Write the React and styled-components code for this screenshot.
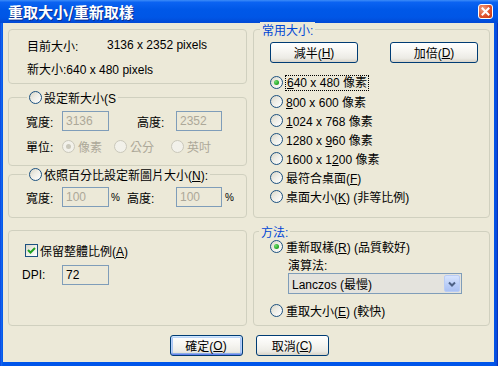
import React from "react";
import styled, { createGlobalStyle, css } from "styled-components";

const GlobalStyle = createGlobalStyle`
  html, body {
    margin: 0;
    padding: 0;
    background: #ffffff;
  }
  body {
    font-family: "Liberation Sans", "Noto Sans CJK TC", sans-serif;
    font-size: 12px;
    color: #000;
  }
`;

const Window = styled.div`
  width: 498px;
  height: 366px;
  box-sizing: border-box;
  display: flex;
  flex-direction: column;
  background: linear-gradient(90deg, #0831d9 0px, #166aee 1px, #0055ea 3px, #0055ea 494px, #0a4ad8 497px, #001ea0 498px);
`;

const TitleBar = styled.div`
  height: 23px;
  flex: none;
  display: flex;
  align-items: center;
  justify-content: space-between;
  padding: 0 5px 0 8px;
  background: linear-gradient(180deg, #3d8cf8 0%, #0b63f2 10%, #0058e8 40%, #0056e6 75%, #0149d5 100%);
  color: #fff;
  font: bold 15px "Noto Sans CJK TC", sans-serif;
  text-shadow: 1px 1px 0 #0b2f8e;
`;

const CloseButton = styled.div`
  width: 15px;
  height: 15px;
  box-sizing: border-box;
  border: 1px solid #fff;
  border-radius: 3px;
  background: radial-gradient(circle at 30% 30%, #f0a080, #e0532c 55%, #c2350f);
  display: flex;
  align-items: center;
  justify-content: center;
`;

const Client = styled.div`
  flex: 1;
  margin: 0 4px 4px 3px;
  background: #ece9d8;
  padding: 6px 4px 0 5px;
  display: flex;
  flex-direction: column;
`;

const Columns = styled.div`
  display: flex;
  gap: 6px;
`;

const Column = styled.div`
  display: flex;
  flex-direction: column;
  width: ${(p) => p.$w}px;
`;

const Group = styled.div`
  position: relative;
  box-sizing: border-box;
  height: ${(p) => p.$h}px;
  margin-top: ${(p) => p.$mt || 0}px;
  border: 1px solid #d0d0bf;
  border-radius: 4px;
  padding: ${(p) => p.$pad};
  display: flex;
  flex-direction: column;
`;

const Legend = styled.div`
  position: absolute;
  top: -8px;
  left: ${(p) => p.$left}px;
  height: 15px;
  padding: 0 2px;
  background: #ece9d8;
  display: flex;
  align-items: center;
  gap: 2px;
  white-space: nowrap;
  color: ${(p) => (p.$blue ? "#0046d5" : "#000")};
`;

const InfoRow = styled.div`
  height: 16px;
  display: flex;
  align-items: center;
  white-space: nowrap;
  & + & {
    margin-top: 7px;
  }
`;

const Row = styled.div`
  height: ${(p) => p.$h || 20}px;
  display: flex;
  align-items: center;
  white-space: nowrap;
  margin-top: ${(p) => p.$mt || 0}px;
  margin-left: ${(p) => p.$ml || 0}px;
`;

const Label = styled.span`
  width: ${(p) => p.$w}px;
  flex: none;
  margin-left: ${(p) => p.$ml || 0}px;
  color: ${(p) => (p.$disabled ? "#aca899" : "#000")};
`;

const Field = styled.div`
  box-sizing: border-box;
  width: ${(p) => p.$w}px;
  height: 20px;
  flex: none;
  border: 1px solid #7f9db9;
  background: #ece9d8;
  color: ${(p) => (p.$disabled ? "#aca899" : "#000")};
  padding-left: 3px;
  line-height: 18px;
`;

const Percent = styled.span`
  width: 8px;
  flex: none;
  font-size: 10px;
  margin-left: ${(p) => p.$ml}px;
`;

const Circle = styled.span`
  box-sizing: border-box;
  width: 13px;
  height: 13px;
  flex: none;
  border-radius: 50%;
  border: 1px solid ${(p) => (p.$disabled ? "#cac8bb" : "#1c5180")};
  background: ${(p) =>
    p.$disabled
      ? "#f2f1ea"
      : "linear-gradient(135deg, #d8d5c6 0%, #eeede6 45%, #ffffff 100%)"};
  display: flex;
  align-items: center;
  justify-content: center;
  &::after {
    content: "";
    width: 5px;
    height: 5px;
    border-radius: 50%;
    display: ${(p) => (p.$checked ? "block" : "none")};
    background: ${(p) =>
      p.$disabled ? "#cac8bb" : "radial-gradient(circle at 35% 35%, #6fe06f, #21a121 70%)"};
  }
`;

const RadioOpt = styled.span`
  display: inline-flex;
  align-items: center;
  gap: 3px;
  width: ${(p) => (p.$w ? `${p.$w}px` : "auto")};
  flex: none;
  color: ${(p) => (p.$disabled ? "#aca899" : "#000")};
`;

const RadioRow = styled.div`
  height: 19px;
  display: flex;
  align-items: center;
  gap: 3px;
  white-space: nowrap;
`;

const Focus = styled.span`
  outline: 1px dotted #000;
  outline-offset: 0;
  padding: 0 1px;
  line-height: 14px;
`;

const Check = styled.span`
  box-sizing: border-box;
  width: 13px;
  height: 13px;
  flex: none;
  border: 1px solid #1c5180;
  background: linear-gradient(135deg, #d8d5c6 0%, #eeede6 45%, #ffffff 100%);
  display: flex;
  align-items: center;
  justify-content: center;
`;

const ButtonRow = styled.div`
  display: flex;
  justify-content: ${(p) => p.$justify || "center"};
  gap: ${(p) => p.$gap || 0}px;
  margin-top: ${(p) => p.$mt || 0}px;
`;

const Button = styled.div`
  box-sizing: border-box;
  width: ${(p) => p.$w}px;
  height: 21px;
  border: 1px solid #003c74;
  border-radius: 3px;
  background: linear-gradient(180deg, #ffffff 0%, #f6f5f1 45%, #ecebe5 80%, #d8d3c8 100%);
  display: flex;
  align-items: center;
  justify-content: center;
  white-space: nowrap;
  ${(p) =>
    p.$default &&
    css`
      box-shadow: inset 0 1px 0 #cee7ff, inset 0 -1px 0 #6982ee, inset 1px 0 0 #b8d0f9,
        inset -1px 0 0 #b8d0f9, inset 0 2px 0 #bcd4f6, inset 0 -2px 0 #89ade4,
        inset 2px 0 0 #a9c5f4, inset -2px 0 0 #a9c5f4;
    `}
`;

const Select = styled.div`
  box-sizing: border-box;
  width: 174px;
  height: 21px;
  margin: 1px 0 0 18px;
  border: 1px solid #7f9db9;
  background: #e4e3dd;
  display: flex;
  align-items: center;
  justify-content: space-between;
  padding: 1px 1px 1px 3px;
`;

const DropButton = styled.div`
  width: 16px;
  height: 17px;
  box-sizing: border-box;
  border: 1px solid #b9ccf5;
  border-radius: 2px;
  background: linear-gradient(180deg, #d7e4fd 0%, #b9cdf8 60%, #aac1f3 100%);
  display: flex;
  align-items: center;
  justify-content: center;
`;

const RadioList = styled.div`
  display: flex;
  flex-direction: column;
  margin-top: ${(p) => p.$mt || 0}px;
`;

const Radio = ({ checked, disabled, w, children }) => (
  <RadioOpt $w={w} $disabled={disabled}>
    <Circle $checked={checked} $disabled={disabled} />
    {children}
  </RadioOpt>
);

const App = () => {
  return (
    <>
      <GlobalStyle />
      <Window>
        <TitleBar>
          <span>重取大小/重新取樣</span>
          <CloseButton>
            <svg width="9" height="9" viewBox="0 0 9 9">
              <path d="M1.5 1.5 L7.5 7.5 M7.5 1.5 L1.5 7.5" stroke="#fff" strokeWidth="2" strokeLinecap="square" />
            </svg>
          </CloseButton>
        </TitleBar>
        <Client>
          <Columns>
            <Column $w={239}>
              <Group $h={55} $pad="7px 0 0 18px">
                <InfoRow>
                  <Label $w={80}>目前大小:</Label>
                  <span>3136 x 2352 pixels</span>
                </InfoRow>
                <InfoRow>新大小:640 x 480 pixels</InfoRow>
              </Group>

              <Group $h={69} $mt={13} $pad="13px 0 0 17px">
                <Legend $left={18}>
                  <Circle />
                  <span>設定新大小(S</span>
                </Legend>
                <Row>
                  <Label $w={36}>寬度:</Label>
                  <Field $w={47} $disabled>3136</Field>
                  <Label $w={39} $ml={28}>高度:</Label>
                  <Field $w={46} $disabled>2352</Field>
                </Row>
                <Row $mt={5}>
                  <Label $w={36}>單位:</Label>
                  <Radio checked disabled w={52}>像素</Radio>
                  <Radio disabled w={57}>公分</Radio>
                  <Radio disabled>英吋</Radio>
                </Row>
              </Group>

              <Group $h={44} $mt={8} $pad="12px 0 0 17px">
                <Legend $left={18}>
                  <Circle />
                  <span>
                    依照百分比設定新圖片大小(<u>N</u>):
                  </span>
                </Legend>
                <Row>
                  <Label $w={36}>寬度:</Label>
                  <Field $w={47} $disabled>100</Field>
                  <Percent $ml={2}>%</Percent>
                  <Label $w={49} $ml={8}>高度:</Label>
                  <Field $w={46} $disabled>100</Field>
                  <Percent $ml={3}>%</Percent>
                </Row>
              </Group>

              <Group $h={96} $mt={12} $pad="11px 0 0 13px">
                <Row $h={16} $ml={3}>
                  <Check>
                    <svg width="9" height="9" viewBox="0 0 9 9">
                      <path d="M1 4 L3.5 6.5 L8 2" fill="none" stroke="#21a121" strokeWidth="2" />
                    </svg>
                  </Check>
                  <Label $w={120} $ml={2}>
                    保留整體比例(<u>A</u>)
                  </Label>
                </Row>
                <Row $mt={7}>
                  <Label $w={40}>DPI:</Label>
                  <Field $w={47}>72</Field>
                </Row>
              </Group>
            </Column>

            <Column $w={237}>
              <Group $h={189} $pad="12px 11px 0 16px">
                <Legend $left={6} $blue>
                  常用大小:
                </Legend>
                <ButtonRow $justify="space-between">
                  <Button $w={88}>
                    減半(<u>H</u>)
                  </Button>
                  <Button $w={88}>
                    加倍(<u>D</u>)
                  </Button>
                </ButtonRow>
                <RadioList $mt={10}>
                  <RadioRow>
                    <Circle $checked />
                    <Focus>
                      <u>6</u>40 x 480 像素
                    </Focus>
                  </RadioRow>
                  <RadioRow>
                    <Circle />
                    <span>
                      <u>8</u>00 x 600 像素
                    </span>
                  </RadioRow>
                  <RadioRow>
                    <Circle />
                    <span>
                      <u>1</u>024 x 768 像素
                    </span>
                  </RadioRow>
                  <RadioRow>
                    <Circle />
                    <span>
                      1280 x <u>9</u>60 像素
                    </span>
                  </RadioRow>
                  <RadioRow>
                    <Circle />
                    <span>
                      1600 x 1<u>2</u>00 像素
                    </span>
                  </RadioRow>
                  <RadioRow>
                    <Circle />
                    <span>
                      最符合桌面(<u>F</u>)
                    </span>
                  </RadioRow>
                  <RadioRow>
                    <Circle />
                    <span>
                      桌面大小(<u>K</u>) (非等比例)
                    </span>
                  </RadioRow>
                </RadioList>
              </Group>

              <Group $h={95} $mt={13} $pad="5px 11px 0 16px">
                <Legend $left={5} $blue>
                  方法:
                </Legend>
                <RadioRow>
                  <Circle $checked />
                  <span>
                    重新取樣(<u>R</u>) (品質較好)
                  </span>
                </RadioRow>
                <Row $h={16} $ml={18}>
                  演算法:
                </Row>
                <Select>
                  <span>Lanczos (最慢)</span>
                  <DropButton>
                    <svg width="8" height="6" viewBox="0 0 8 6">
                      <path d="M1 1.5 L4 4.5 L7 1.5" fill="none" stroke="#4d6185" strokeWidth="2" />
                    </svg>
                  </DropButton>
                </Select>
                <RadioList $mt={7}>
                  <RadioRow>
                    <Circle />
                    <span>
                      重取大小(<u>E</u>) (較快)
                    </span>
                  </RadioRow>
                </RadioList>
              </Group>
            </Column>
          </Columns>

          <ButtonRow $gap={13} $mt={9}>
            <Button $w={73} $default>
              確定(<u>O</u>)
            </Button>
            <Button $w={73}>
              取消(<u>C</u>)
            </Button>
          </ButtonRow>
        </Client>
      </Window>
    </>
  );
};

export default App;
